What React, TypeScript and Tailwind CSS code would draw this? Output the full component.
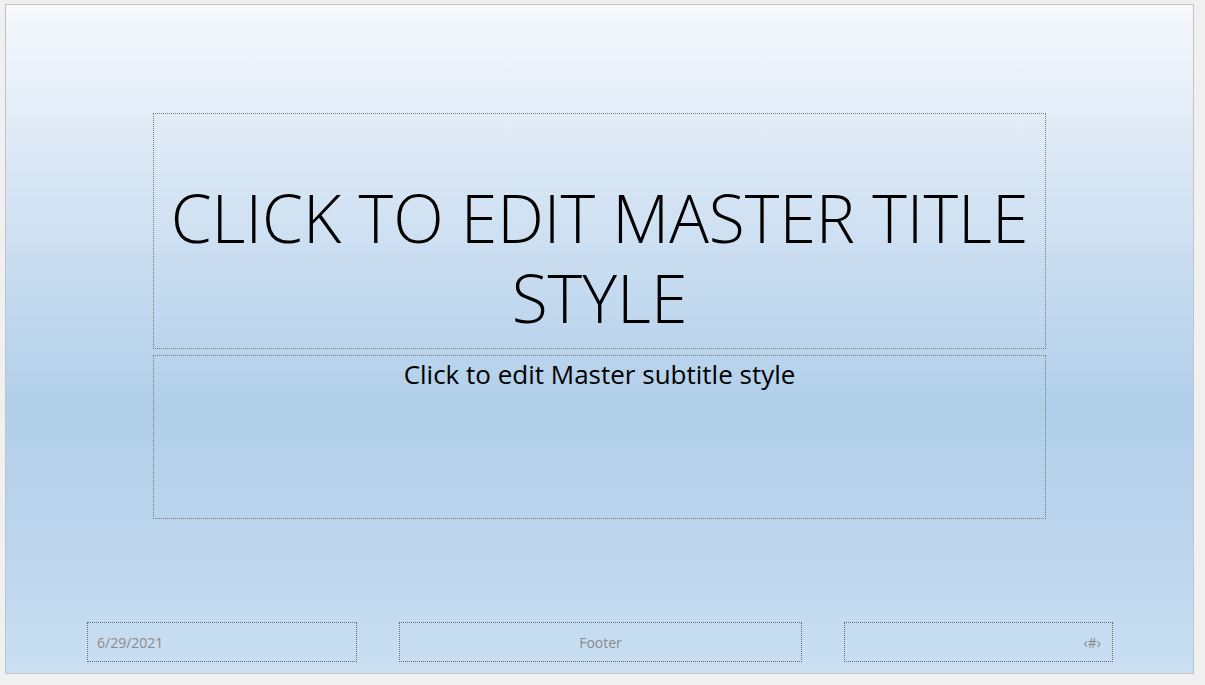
export default function App() {
  return (
    <div className="w-[1205px] h-[685px] bg-[#f0f0f0] pt-[4px] pl-[5px] overflow-hidden">
      <div
        className="w-[1189px] h-[670px] border border-[#c3c3c3] flex flex-col bg-[linear-gradient(180deg,#f6f9fd_0%,#e2ecf7_17%,#c8dcf0_40%,#b1cfea_60%,#bcd5ed_80%,#cadff2_100%)]"
        style={{ fontFamily: '"Open Sans", "Liberation Sans", sans-serif' }}
      >
        {/* Title placeholder */}
        <div className="mt-[108px] ml-[147px] w-[893px] h-[236px] border border-dotted border-[#7a7a7a] flex flex-col items-center justify-center pt-[52px] font-light text-black text-[66px] leading-[80px]">
          <h1>CLICK TO EDIT MASTER TITLE</h1>
          <h1>STYLE</h1>
        </div>

        {/* Subtitle placeholder */}
        <div className="mt-[6px] ml-[147px] w-[893px] h-[164px] border border-dotted border-[#7a7a7a] flex justify-center">
          <p className="text-black text-[26px] leading-[36px]">Click to edit Master subtitle style</p>
        </div>

        {/* Footer row */}
        <div className="mt-auto mb-[11px] ml-[81px] flex text-[14px] text-[#8a8a8a]">
          <div className="w-[270px] h-[40px] border border-dotted border-[#6a6a6a] flex items-center pl-[9px]">6/29/2021</div>
          <div className="ml-[42px] w-[403px] h-[40px] border border-dotted border-[#6a6a6a] flex items-center justify-center">Footer</div>
          <div className="ml-[42px] w-[269px] h-[40px] border border-dotted border-[#6a6a6a] flex items-center justify-end pr-[11px]">‹#›</div>
        </div>
      </div>
    </div>
  );
}
